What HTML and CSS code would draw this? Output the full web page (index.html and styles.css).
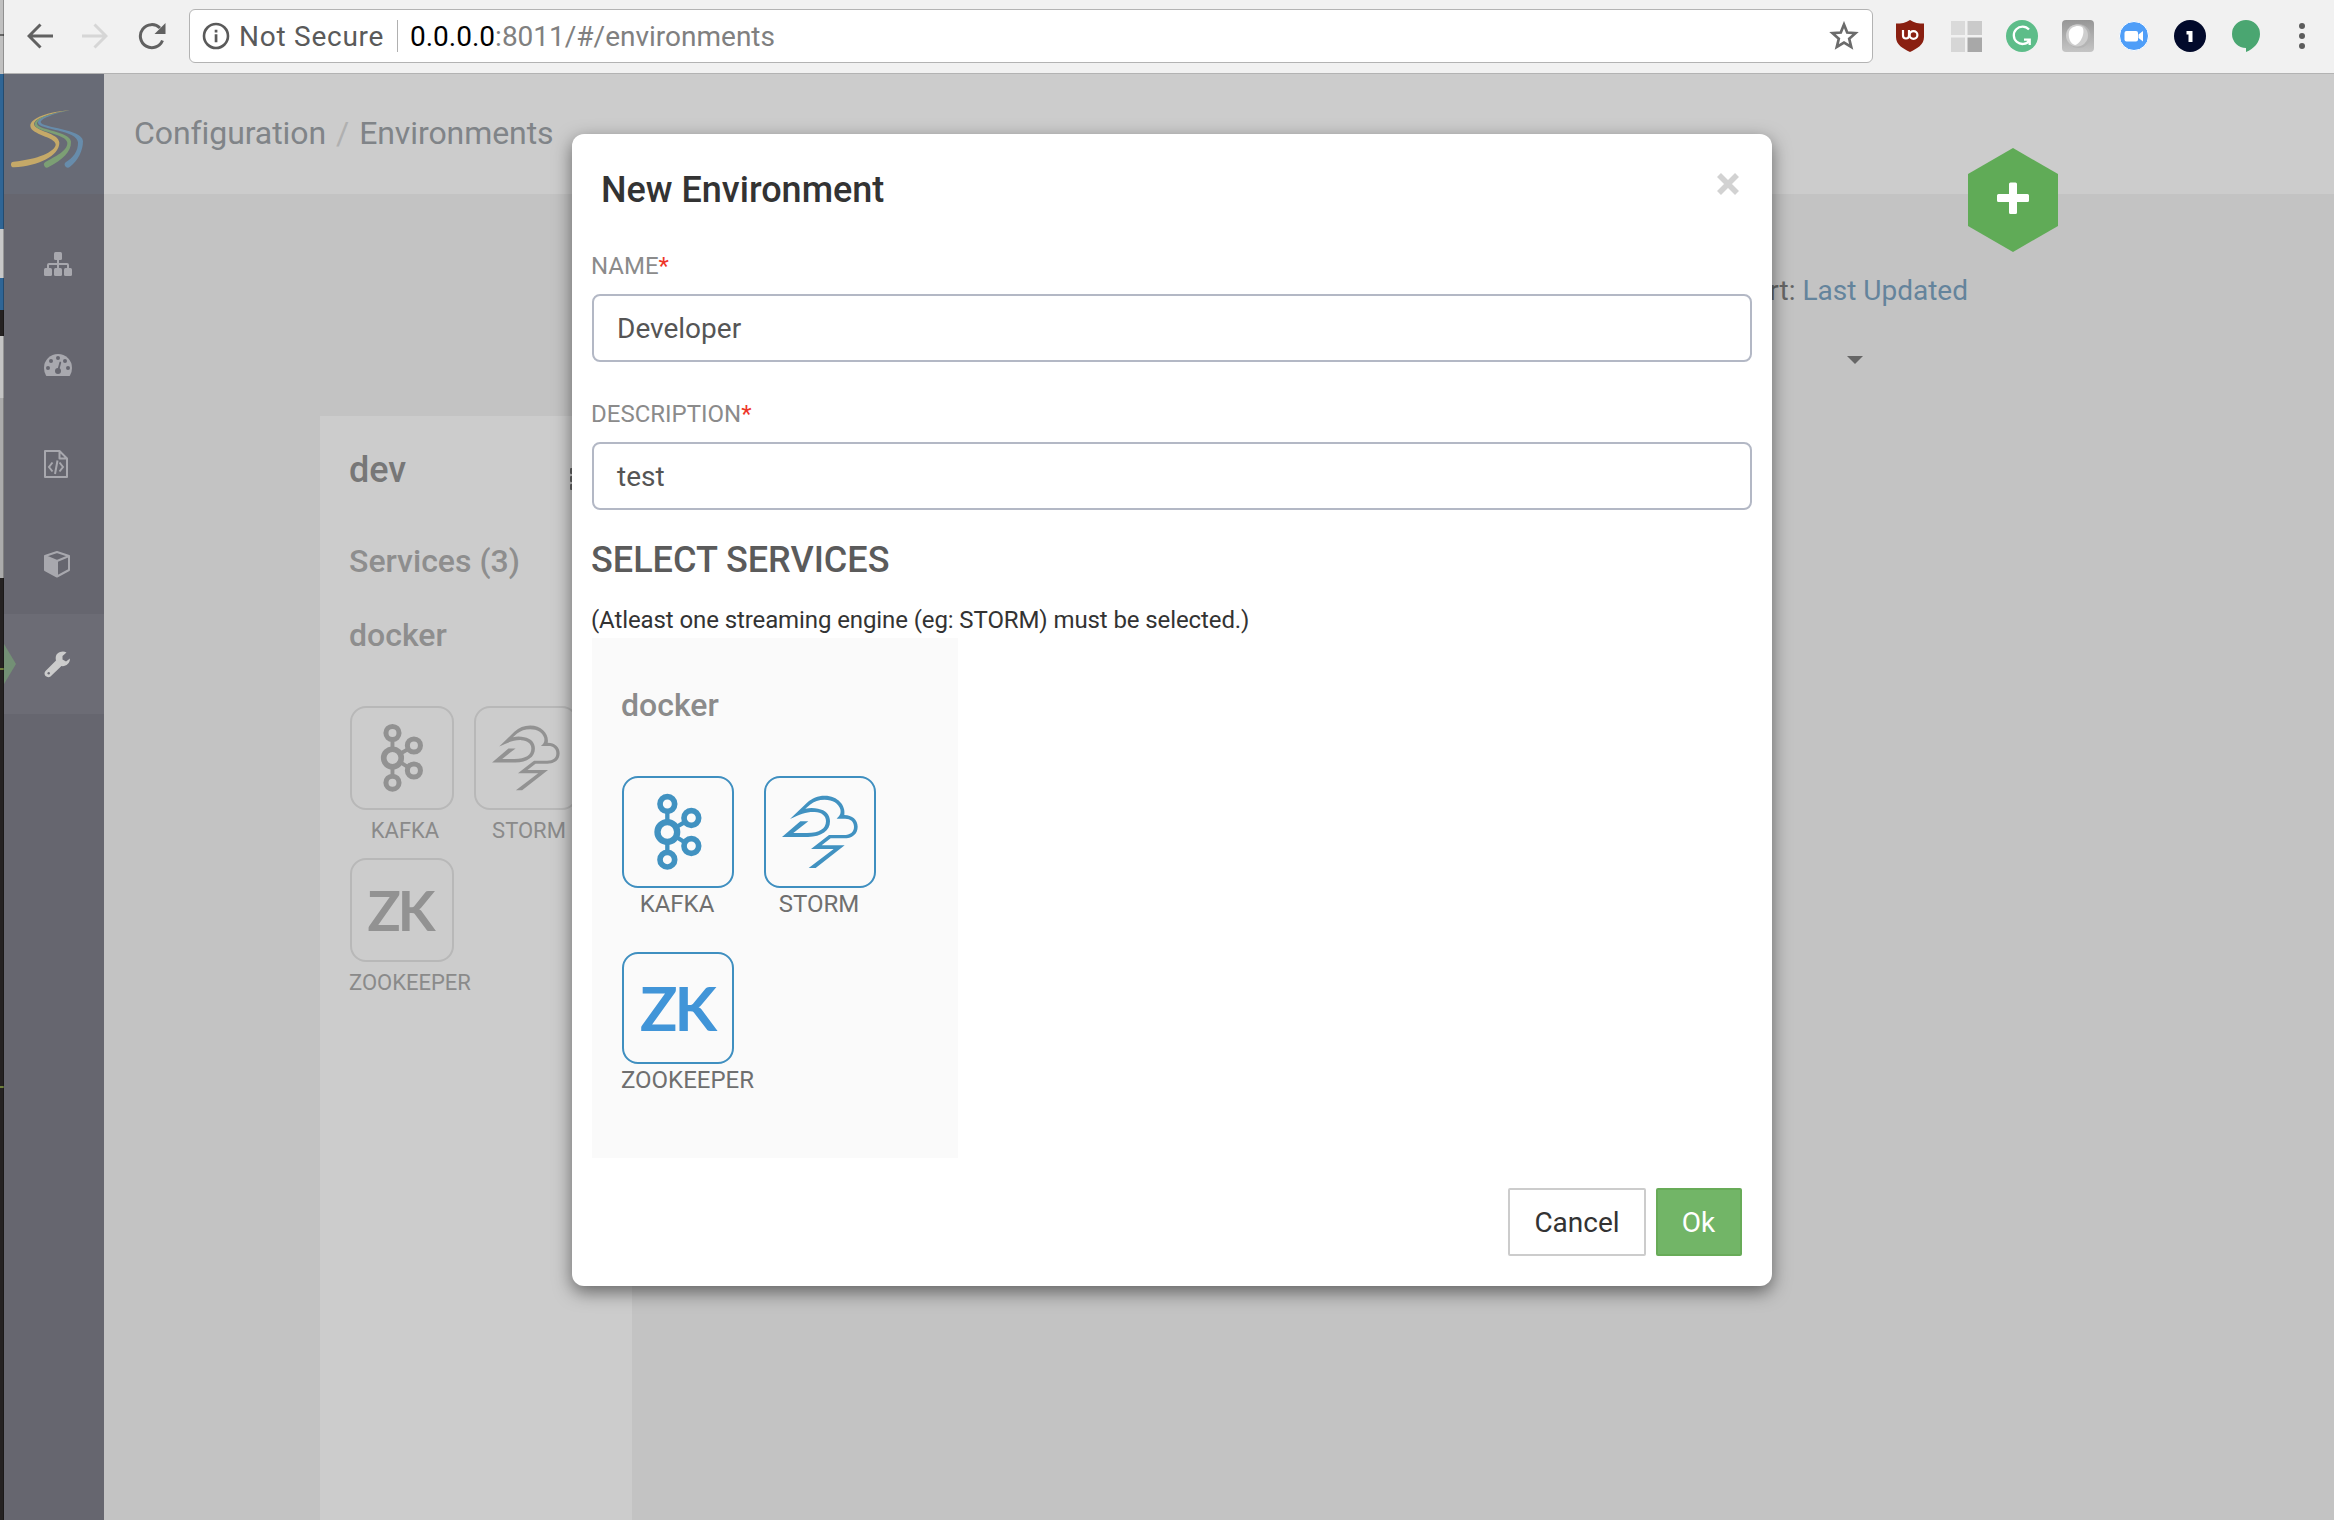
FILE: index.html
```html
<!DOCTYPE html>
<html lang="en">
<head>
<meta charset="utf-8">
<title>Configuration / Environments</title>
<link rel="stylesheet" href="styles.css">
</head>
<body>
<svg class="defs" aria-hidden="true">
  <symbol id="kafka" viewBox="156 78 336 336">
    <g fill="none" stroke="currentColor">
      <path stroke-width="13" d="M292 184V216M292 276V307M319 231L343 217M319 261L343 276"/>
      <g stroke-width="17"><circle cx="292" cy="162" r="22"/><circle cx="364" cy="204" r="22"/><circle cx="364" cy="288" r="22"/><circle cx="292" cy="329" r="22"/></g>
      <circle cx="292" cy="246" r="29.5" stroke-width="19"/>
    </g>
  </symbol>
  <symbol id="storm" viewBox="583 78 336 336">
    <path fill="currentColor" d="M661 207L712 158C728 144 744 137 765 137C805 137 829 167 824 195C848 195 864 210 864 230C864 252 848 265 822 265H783L756 286H825L738 354H717L792 297H724L778 255H822C842 255 853 246 853 230C853 214 841 205 824 206H801C813 196 814 188 812 178C807 160 789 149 765 149C747 149 734 154 721 164L707 176C722 173 734 174 745 176C768 180 781 194 781 214C781 243 756 260 715 261H637L692 214H716L671 249H712C750 249 769 236 769 214C769 197 756 187 735 186C710 185 692 193 661 207Z"/>
  </symbol>
</svg>
<div class="screen">
  <div class="behind"></div>
  <div class="window">
    <header class="toolbar">
      <div class="nav">
        <svg width="26" height="26" viewBox="0 0 26 26" class="ic-dark"><path d="M26 13H2M13.500 1.500L2 13L13.500 24.500"/></svg>
        <svg width="26" height="26" viewBox="0 0 26 26" class="ic-light"><path d="M0 13H24M12.500 1.500L24 13L12.500 24.500"/></svg>
        <svg class="reload" width="28" height="28" viewBox="0 0 28 28"><path fill="none" stroke="#616161" stroke-width="3" d="M24.500 18.500A11.500 11.500 0 1 1 22 6"/><path fill="#616161" d="M27.500 1V12H16.500Z"/></svg>
      </div>
      <div class="address">
        <svg width="28" height="28" viewBox="0 0 28 28"><circle cx="14" cy="14" r="12" fill="none" stroke="#5a5a5a" stroke-width="2.600"/><path fill="#5a5a5a" d="M12.700 12.300h2.700v8h-2.700zM12.700 7.800h2.700v2.600h-2.700z"/></svg>
        <span class="insecure">Not Secure</span>
        <span class="divider"></span>
        <span class="url"><b>0.0.0.0</b>:8011/#/environments</span>
        <svg class="star" width="30" height="30" viewBox="0 0 30 30"><path fill="none" stroke="#6b6b6b" stroke-width="2.700" d="M15 3.500L18.200 11.500L26.500 12.200L20.200 17.800L22.200 26L15 21.600L7.800 26L9.800 17.800L3.500 12.200L11.800 11.500Z"/></svg>
      </div>
      <div class="extensions">
        <svg width="32" height="32" viewBox="0 0 32 32"><path fill="#8a2011" d="M16 0C20 3 25 3.500 30 3.500V17C30 25 23 28.500 16 32C9 28.500 2 25 2 17V3.500C7 3.500 12 3 16 0Z"/><path fill="none" stroke="#fff" stroke-width="2.200" d="M9 10V15.500A3 3 0 0 0 15 15.500V10"/><circle cx="19.500" cy="15" r="3.900" fill="none" stroke="#fff" stroke-width="2.200"/></svg>
        <svg width="32" height="32" viewBox="0 0 32 32"><path fill="#dadada" d="M1 1H15V15H1Z"/><path fill="#cacaca" d="M17.500 1H32V15H17.500Z"/><path fill="#d6d6d6" d="M1 17.500H15V32H1Z"/><path fill="#a8a8a8" d="M17.500 17.500H32V32H17.500Z"/></svg>
        <svg width="32" height="32" viewBox="0 0 32 32"><circle cx="16" cy="16" r="16" fill="#5dbd89"/><path fill="none" stroke="#fff" stroke-width="2.300" d="M23 9.500A8.700 8.700 0 1 0 23.500 20.500M18 19.700H23.700V25"/></svg>
        <svg width="32" height="32" viewBox="0 0 32 32"><defs><linearGradient id="gg" x2="0" y2="1"><stop stop-color="#969696"/><stop offset="1" stop-color="#c5c5c5"/></linearGradient></defs><rect width="32" height="32" rx="4" fill="url(#gg)"/><circle cx="16.500" cy="16" r="12" fill="#b4b4b4"/><circle cx="15" cy="15.500" r="11" fill="#cecece"/><path fill="#fff" d="M7 12C8 7 16 4.500 20 7C24 11 19 24 13 25C8 24 6 17 7 12Z"/></svg>
        <svg width="32" height="32" viewBox="0 0 32 32"><circle cx="16" cy="16" r="14.500" fill="#4f9ef8" stroke="#fff"/><rect x="6.500" y="11" width="13.500" height="10.500" rx="2" fill="#fff"/><path fill="#fff" d="M20.500 14.500L25 11V21.500L20.500 18Z"/></svg>
        <svg width="32" height="32" viewBox="0 0 32 32"><circle cx="16" cy="16" r="16" fill="#020a2b"/><path fill="#fff" d="M12.500 11H18.500V22H14.500V14.500H12.500Z"/></svg>
        <svg width="32" height="32" viewBox="0 0 32 32"><path fill="#4aa671" d="M16 0A14 14 0 0 1 30 14C30 22 24 29 16 32V28A14 14 0 1 1 16 0Z"/></svg>
      </div>
      <div class="menu"><i></i><i></i><i></i></div>
    </header>
    <div class="app">
      <nav class="sidebar">
        <div class="logo">
          <svg width="100" height="120" viewBox="12 42 300 360">
            <path fill="#c5a968" d="M210 151C150 154 90 174 91 198C92 224 166 231 167 253C167 275 112 299 41 305A8.500 8.500 0 0 0 42 322C115 318 178 287 178 248C177 218 103 214 102 192C103 176 155 158 210 151Z"/>
            <path fill="#7c9f74" d="M210 151C155 159 103 174 104 194C106 215 200 221 202 248C203 273 165 289 136 306A8.500 8.500 0 0 0 146 321C187 299 214 275 213 245C211 213 114 211 111 191C112 176 160 159 210 151Z"/>
            <path fill="#678cab" d="M210 151C160 161 113 172 114 189C117 209 232 210 234 247C235 275 218 295 197 307A8.500 8.500 0 0 0 210 320C234 301 249 273 249 243C247 207 125 204 122 187C123 175 165 160 210 151Z"/>
          </svg>
        </div>
        <a class="item"><svg width="28" height="28" viewBox="0 0 28 28"><g fill="currentColor"><rect x="10" y="2" width="8" height="8" rx="1.500"/><rect y="18" width="8" height="8" rx="1.500"/><rect x="10" y="18" width="8" height="8" rx="1.500"/><rect x="20" y="18" width="8" height="8" rx="1.500"/></g><path fill="none" stroke="currentColor" stroke-width="2" d="M14 10V18M4 18V15Q4 14 5 14H23Q24 14 24 15V18"/></svg></a>
        <a class="item"><svg width="28" height="28" viewBox="0 0 28 28"><path fill="currentColor" d="M14 4A14 14 0 0 1 28 18Q28 22 26 25.500Q25.700 26 25 26H3Q2.300 26 2 25.500Q0 22 0 18A14 14 0 0 1 14 4Z"/><g fill="#66666f"><circle cx="4" cy="18" r="2"/><circle cx="7" cy="11" r="2"/><circle cx="14" cy="8" r="2"/><circle cx="21" cy="11" r="2"/><circle cx="24" cy="18" r="2"/><circle cx="14" cy="21" r="3"/></g><path stroke="#66666f" stroke-width="1.800" stroke-linecap="round" d="M14.300 20L16.300 12.500"/></svg></a>
        <a class="item"><svg width="24" height="28" viewBox="0 0 24 28"><g fill="none" stroke="currentColor" stroke-width="2"><path stroke-linejoin="round" d="M15.500 1H1V27H23V8.500L15.500 1V8.500H23"/><path d="M8.500 12.500L5 17L8.500 21.500M15.500 12.500L19 17L15.500 21.500M13.500 10.500L11 24"/></g></svg></a>
        <a class="item"><svg width="26" height="28" viewBox="0 0 26 28"><path fill="none" stroke="currentColor" stroke-width="2" stroke-linejoin="round" d="M13 2L25 6V20L13 26.500L1 20V6ZM1 6L13 11L25 6"/><path fill="currentColor" d="M1 6L14 11V26.500L1 20Z"/></svg></a>
        <a class="item active"><svg width="26" height="28" viewBox="0 0 26 28"><path fill="currentColor" d="M15 12.500L18 15.500L6.500 26.500Q4 28 1.500 26Q-.500 23.500 1.500 21L12 10.500Q10.500 4 16 2Q19.500 .700 22.500 2.500L18.500 6V9.500L22 11.500L26 8.500Q26 14.500 20 16Q17.500 16.500 15 15Z"/><circle cx="4.700" cy="23.300" r="1.200" fill="#6c6c75"/></svg></a>
      </nav>
      <main class="content">
        <div class="crumbs"><span>Configuration</span><i>/</i><span>Environments</span></div>
        <div class="board">
          <section class="env">
            <div class="env-head"><h2>dev</h2><div class="more"><i></i><i></i><i></i></div></div>
            <h3 class="count">Services (3)</h3>
            <h3 class="pool">docker</h3>
            <div class="tiles small">
              <div class="svc"><div class="tile"><svg><use href="#kafka"/></svg></div><span class="k">KAFKA</span></div>
              <div class="svc"><div class="tile"><svg><use href="#storm"/></svg></div><span class="s">STORM</span></div>
              <div class="svc"><div class="tile"><b>ZK</b></div><span>ZOOKEEPER</span></div>
            </div>
          </section>
          <div class="sort"><div>Sort: <a>Last Updated</a></div><i class="caret"></i></div>
        </div>
      </main>
      <button class="add"><svg width="90" height="104" viewBox="0 0 90 104"><path fill="#60ab57" d="M45 0L90 26V78L45 104L0 78V26Z"/><path fill="#fff" d="M42.500 34.500h5q1.500 0 1.500 1.500v10h10.500q1.500 0 1.500 1.500v5q0 1.500-1.500 1.500H49v10.500q0 1.500-1.500 1.500h-5q-1.500 0-1.500-1.500V54H30.500q-1.500 0-1.500-1.500v-5q0-1.500 1.500-1.500H41V36q0-1.500 1.500-1.500Z"/></svg></button>
    </div>
  </div>
  <div class="modal" role="dialog">
    <div class="modal-head"><h1>New Environment</h1><svg width="22" height="22" viewBox="0 0 22 22"><path stroke="#d2d2d2" stroke-width="5.600" d="M2 2L20 20M20 2L2 20"/></svg></div>
    <label>NAME<em>*</em></label>
    <div class="field">Developer</div>
    <label>DESCRIPTION<em>*</em></label>
    <div class="field">test</div>
    <h2 class="select">SELECT SERVICES</h2>
    <p class="hint">(Atleast one streaming engine (eg: STORM) must be selected.)</p>
    <section class="panel">
      <h3>docker</h3>
      <div class="tiles">
        <div class="svc"><div class="tile"><svg><use href="#kafka"/></svg></div><span>KAFKA</span></div>
        <div class="svc"><div class="tile"><svg><use href="#storm"/></svg></div><span>STORM</span></div>
        <div class="svc"><div class="tile"><b>ZK</b></div><span>ZOOKEEPER</span></div>
      </div>
    </section>
    <footer><button class="btn">Cancel</button><button class="btn ok">Ok</button></footer>
  </div>
</div>
</body>
</html>
```
FILE: styles.css
```css
* { box-sizing: border-box; }
body { margin: 0; font-family: Roboto, "Liberation Sans", sans-serif; font-size: 28px; color: #333; }
h1, h2, h3, p { margin: 0; font-weight: 500; white-space: nowrap; }
button { font: inherit; border: 0; padding: 0; background: none; }
svg { display: block; flex: none; }
.defs { position: absolute; width: 0; height: 0; }
.screen { position: relative; display: flex; width: 2334px; height: 1520px; overflow: hidden; }
.behind {
  width: 4px; flex: none; border-right: 1px solid rgba(0,0,0,.25);
  background: linear-gradient(#c0c0c0 34px, #666 34px 36px, #c0c0c0 36px 74px, #2f6595 74px 229px, #c8c8c8 229px 278px, #2f6595 278px 310px, #252222 310px 336px, #c4c4c4 336px 398px, #ababab 398px 578px, #252222 578px 668px, #6f803d 668px 670px, #252222 670px 1086px, #6f803d 1086px 1088px, #252222 1088px);
}
.window { flex: 1; min-width: 0; display: flex; flex-direction: column; }

/* browser toolbar */
.toolbar { height: 74px; flex: none; display: flex; align-items: center; padding-bottom: 1px; background: #f1f1f1; border-bottom: 1px solid #b3b3b3; }
.nav { display: flex; flex: none; align-items: center; gap: 29px; width: 185px; padding-left: 23px; }
.nav .ic-dark, .nav .ic-light { fill: none; stroke: #616161; stroke-width: 3; }
.nav .ic-light { stroke: #d6d6d6; }
.reload { margin-left: 1px; }
.address { width: 1684px; flex: none; height: 54px; display: flex; align-items: center; padding: 0 13px 0 12px; background: #fff; border: 1px solid #b3b3b3; border-radius: 6px; }
.insecure { margin-left: 9px; width: 158px; padding-top: 1px; color: #5a5a5a; letter-spacing: .75px; white-space: nowrap; }
.divider { width: 1px; height: 32px; background: #b0b0b0; }
.url { margin-left: 12px; padding-top: 1px; flex: 1; color: #808080; }
.url b { font-weight: 400; color: #000; }
.extensions { display: flex; gap: 24px; margin-left: 21px; }
.menu { margin-left: 37px; display: grid; gap: 4px; }
.menu i { width: 6px; height: 6px; border-radius: 50%; background: #5c5c5c; }

/* application */
.app { position: relative; flex: 1; display: flex; }
.sidebar { width: 100px; flex: none; background: #66666f; }
.logo { height: 120px; margin-bottom: 20px; background: #686b76; }
.item { height: 100px; display: flex; align-items: center; padding-left: 40px; color: #a8a8ae; }
.item.active { padding-left: 0; background: #6c6c75; color: #ccc; }
.item.active::before { content: ""; margin-right: 28px; border: solid transparent; border-width: 20px 0 20px 12px; border-left-color: #739075; }
.content { flex: 1; display: flex; flex-direction: column; background: #c3c3c3; }
.crumbs { height: 120px; display: flex; align-items: center; gap: 10px; padding: 0 0 2px 30px; background: #ccc; color: #808488; font-size: 32px; letter-spacing: -.08px; }
.crumbs i { font-style: normal; color: #b0b0b0; }
.board { flex: 1; display: flex; align-items: flex-start; justify-content: space-between; padding: 0 366px 0 216px; }
.env { width: 312px; height: 1104px; margin-top: 222px; padding: 30px 30px 30px 29px; background: #ccc; color: #8e8e8e; }
.env h2 { font-size: 36px; line-height: 48px; color: #777; }
.env-head { display: flex; justify-content: space-between; }
.more { display: grid; gap: 2px; align-content: start; width: 32px; padding-top: 22px; }
.more i { width: 6px; height: 6px; border-radius: 1px; background: #666; }
h3 { font-size: 32px; line-height: 40px; }
.count { margin-top: 47px; }
.pool { margin-top: 34px; }
.tiles { display: grid; grid-template-columns: 112px 112px; column-gap: 30px; row-gap: 32px; margin: 51px 0 0 1px; font-size: 24px; line-height: 32px; color: #6f6f6f; }
.svc { display: flex; flex-direction: column; align-items: center; height: 144px; }
.svc span { margin-left: -2px; }
.svc:last-child { align-items: flex-start; }
.svc:last-child span { margin-left: -1px; }
.tile { width: 112px; height: 112px; display: grid; place-content: center; flex: none; border: 2px solid #3f8fc0; border-radius: 16px; color: #4192c1; }
.tile svg { width: 112px; height: 112px; }
.tile b { margin: 0 2px 3px 0; font: 700 62px/64px Lato, sans-serif; letter-spacing: -3px; color: #4195d8; }
.tiles.small { grid-template-columns: 104px 104px; column-gap: 20px; row-gap: 16px; margin-top: 51px; font-size: 22px; color: #8a8a8a; }
.small .svc { height: 136px; }
.small .tile { width: 104px; height: 104px; border-color: #b8b8b8; color: #929292; }
.small .tile svg { width: 100px; height: 100px; }
.small .tile b { margin: 0 4px 1px 0; font-size: 55px; color: #929292; }
.small span { line-height: 42px; }
.small .k, .small .s { margin-left: 6px; }
.sort { display: grid; justify-items: center; margin-top: 81px; color: #666; line-height: 32px; }
.sort a { color: #64849c; }
.caret { margin: 49px 0 0 6px; border: solid transparent; border-width: 8px 8px 0; border-top-color: #666; }
.add { position: absolute; left: 1964px; top: 74px; }

/* dialog */
.modal { position: absolute; left: 572px; top: 134px; width: 1200px; height: 1152px; padding: 0 20px; background: #fff; border-radius: 12px; box-shadow: 0 6px 18px rgba(0,0,0,.5); }
.modal-head { display: flex; justify-content: space-between; align-items: flex-start; height: 110px; padding: 39px 13px 0 9px; }
h1 { font-size: 36px; line-height: 34px; }
label { display: block; height: 50px; margin-left: -1px; line-height: 44px; font-size: 24px; color: #8b8b8b; }
em { font-style: normal; color: #ee3528; }
.field { height: 68px; margin-bottom: 30px; padding: 1px 0 0 23px; border: 2px solid #b3b8c5; border-radius: 8px; line-height: 64px; color: #555; }
.select { margin-left: -1px; font-size: 36px; line-height: 40px; color: #5b5b5b; }
.hint { margin: 22px 0 0 -1px; font-size: 24px; line-height: 36px; font-weight: 400; letter-spacing: -.1px; }
.panel { width: 366px; height: 520px; padding: 47px 30px 0 29px; background: #fafafa; color: #8b8b8b; }
footer { display: flex; justify-content: flex-end; gap: 10px; padding: 30px 10px; }
.btn { width: 138px; height: 68px; border: 2px solid #ccc; border-radius: 2px; color: #333; }
.btn.ok { width: 86px; padding-right: 1px; background: #72b567; border-color: #68ab58; color: #fff; }
```
